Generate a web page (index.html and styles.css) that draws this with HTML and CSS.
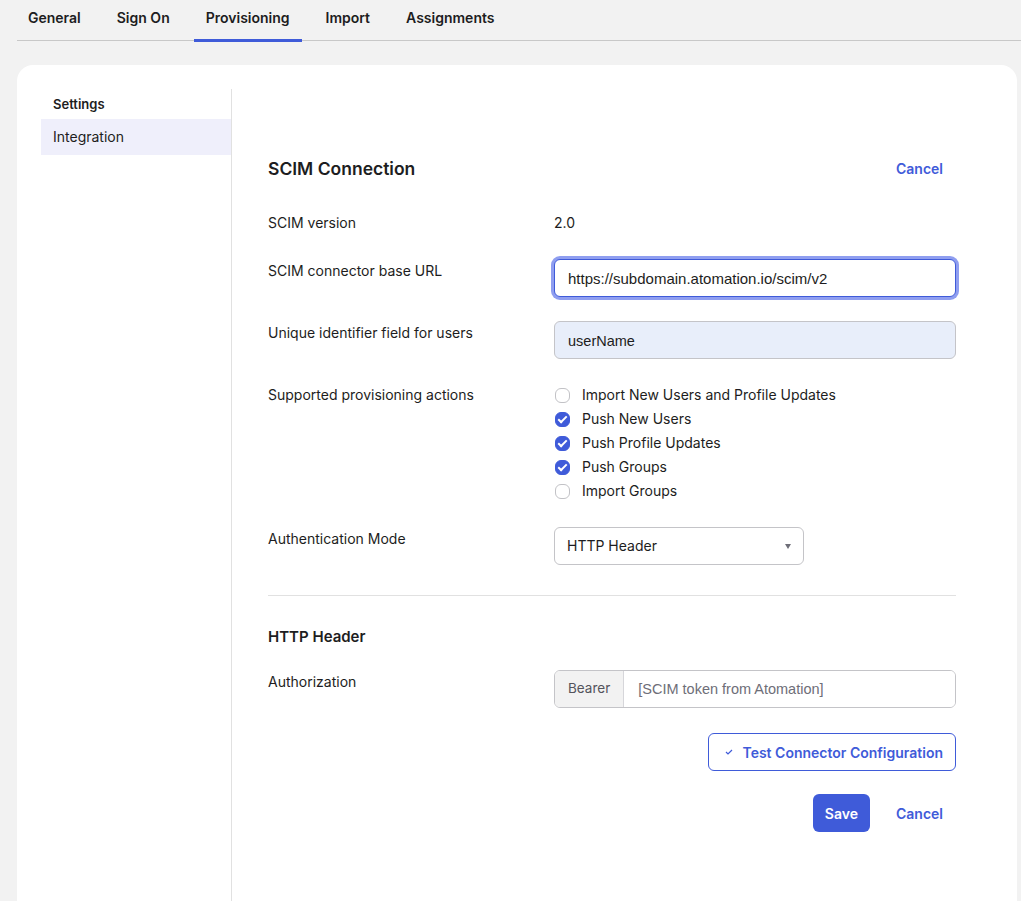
FILE: index.html
```html
<!DOCTYPE html>
<html lang="en">
<head>
    <meta charset="UTF-8">
    <meta name="viewport" content="width=device-width, initial-scale=1.0">
    <title>Provisioning</title>
    <link rel="stylesheet" href="styles.css">
</head>
<body>
    <nav class="tabs">
        <a href="#general">General</a>
        <a href="#signon">Sign On</a>
        <a href="#provisioning" class="active">Provisioning</a>
        <a href="#import">Import</a>
        <a href="#assignments">Assignments</a>
    </nav>

    <div class="card">
        <aside class="side">
            <div class="side-title">Settings</div>
            <a href="#integration" class="side-item">Integration</a>
        </aside>

        <main class="content">
            <div class="section-head">
                <h2>SCIM Connection</h2>
                <a href="#cancel" class="link">Cancel</a>
            </div>

            <div class="row first">
                <div class="label">SCIM version</div>
                <div class="value">2.0</div>
            </div>

            <div class="row">
                <div class="label">SCIM connector base URL</div>
                <div class="value"><input type="text" class="field focus" value="https://subdomain.atomation.io/scim/v2"></div>
            </div>

            <div class="row">
                <div class="label">Unique identifier field for users</div>
                <div class="value"><input type="text" class="field filled" value="userName"></div>
            </div>

            <div class="row">
                <div class="label">Supported provisioning actions</div>
                <div class="value checks">
                    <label class="check"><span class="box"></span>Import New Users and Profile Updates</label>
                    <label class="check"><span class="box on"></span>Push New Users</label>
                    <label class="check"><span class="box on"></span>Push Profile Updates</label>
                    <label class="check"><span class="box on"></span>Push Groups</label>
                    <label class="check"><span class="box"></span>Import Groups</label>
                </div>
            </div>

            <div class="row">
                <div class="label">Authentication Mode</div>
                <div class="value">
                    <div class="select">HTTP Header<span class="caret"></span></div>
                </div>
            </div>

            <hr>

            <h3>HTTP Header</h3>

            <div class="row after-head">
                <div class="label">Authorization</div>
                <div class="value">
                    <div class="group">
                        <span class="addon">Bearer</span>
                        <input type="text" class="group-input" placeholder="[SCIM token from Atomation]">
                    </div>
                </div>
            </div>

            <div class="actions">
                <button class="btn-outline">
                    <svg width="8" height="6" viewBox="0 0 8 6"><path d="M1 3l2 2 4-4" fill="none" stroke="#3f5bd9" stroke-width="1.2"/></svg>
                    Test Connector Configuration
                </button>
            </div>

            <div class="actions save-row">
                <button class="btn-primary">Save</button>
                <a href="#cancel" class="link">Cancel</a>
            </div>
        </main>
    </div>
</body>
</html>
```

FILE: styles.css
```css
body {
    margin: 0;
    background-color: #f2f2f2;
    font-family: Inter, "Noto Sans", sans-serif;
    color: #1d1d21;
    font-size: 14px;
}
.tabs {
    display: flex;
    margin-left: 17px;
    height: 40px;
    border-bottom: 1px solid #c8c8c8;
}
.tabs a {
    display: block;
    padding: 9px 12px 0;
    margin-right: 12px;
    color: #1d1d21;
    font-weight: 600;
    text-decoration: none;
    height: 30px;
    border-bottom: 3px solid transparent;
}
.tabs a:first-child {
    margin-left: -1px;
}
.tabs a.active {
    border-bottom-color: #3f5bd9;
}
.card {
    display: flex;
    margin: 24px 4px 0 17px;
    background: #fff;
    border-radius: 16px 16px 0 0;
    height: 840px;
    padding-top: 24px;
}
.side {
    width: 190px;
    margin-left: 24px;
    border-right: 1px solid #e1e1e1;
}
.side-title {
    font-size: 13px;
    font-weight: 600;
    padding: 7px 12px 7px;
}
.side-item {
    display: block;
    background: #efeffb;
    color: #1d1d21;
    text-decoration: none;
    padding: 9px 12px;
    line-height: 18px;
}
.content {
    width: 688px;
    margin-left: 36px;
    padding-top: 67px;
}
.section-head {
    display: flex;
    justify-content: space-between;
    align-items: center;
    padding-right: 13px;
    height: 24px;
}
h2 {
    font-size: 17.5px;
    font-weight: 600;
    margin: 0;
}
h3 {
    font-size: 15px;
    font-weight: 600;
    line-height: 20px;
    margin: 31px 0 0;
}
.link {
    color: #3f5bd9;
    font-weight: 600;
    text-decoration: none;
}
.row {
    display: flex;
    align-items: flex-start;
    margin-top: 24px;
}
.row.first {
    margin-top: 31px;
}
.row.after-head {
    margin-top: 23px;
}
.label {
    width: 286px;
    line-height: 24px;
}
.value {
    flex: 1;
    line-height: 24px;
}
.field {
    display: block;
    box-sizing: border-box;
    width: 402px;
    height: 38px;
    margin: 0;
    padding: 0 13px;
    border: 1px solid #c4c4c8;
    border-radius: 6px;
    font-family: "Liberation Sans", Arial, sans-serif;
    font-size: 15px;
    color: #1d1d21;
    outline: none;
}
.field.focus {
    border-color: #3f5bd9;
    box-shadow: 0 0 0 3px #8f9ef0;
}
.field.filled {
    background: #e8eefa;
    font-size: 14.5px;
    padding-top: 2px;
}
.checks {
    display: flex;
    flex-direction: column;
}
.check {
    display: flex;
    align-items: center;
    height: 24px;
    gap: 12px;
}
.box {
    box-sizing: border-box;
    width: 15px;
    height: 15px;
    margin-left: 1px;
    border: 1.5px solid #c2c2c6;
    border-radius: 6px;
    background: #fff;
    position: relative;
}
.box.on {
    border-color: #3f5bd9;
    background: #3f5bd9;
}
.box.on::after {
    content: "";
    position: absolute;
    left: 4px;
    top: 1px;
    width: 3px;
    height: 7px;
    border: solid #fff;
    border-width: 0 2px 2px 0;
    transform: rotate(45deg);
}
.select {
    box-sizing: border-box;
    width: 250px;
    height: 38px;
    padding: 0 12px;
    border: 1px solid #c4c4c8;
    border-radius: 6px;
    display: flex;
    align-items: center;
    justify-content: space-between;
}
.caret {
    width: 0;
    height: 0;
    border-left: 3px solid transparent;
    border-right: 3px solid transparent;
    border-top: 5px solid #6e6e78;
}
hr {
    border: none;
    border-top: 1px solid #e1e1e1;
    margin: 30px 0 0;
}
.group {
    display: flex;
    width: 402px;
    height: 38px;
    box-sizing: border-box;
    border: 1px solid #c4c4c8;
    border-radius: 6px;
    overflow: hidden;
}
.addon {
    background: #f2f2f2;
    color: #54545c;
    border-right: 1px solid #d6d6da;
    padding: 0 13px 3px;
    display: flex;
    align-items: center;
    font-size: 13.5px;
}
.group-input {
    flex: 1;
    border: none;
    outline: none;
    padding: 0 14px;
    font-family: "Liberation Sans", Arial, sans-serif;
    font-size: 14.5px;
}
.group-input::placeholder {
    color: #6e6e78;
}
.actions {
    display: flex;
    justify-content: flex-end;
    align-items: center;
    margin-top: 25px;
}
.btn-outline {
    display: flex;
    align-items: center;
    gap: 10px;
    height: 38px;
    padding: 0 12px 0 16px;
    background: #fff;
    border: 1px solid #3f5bd9;
    border-radius: 6px;
    color: #3f5bd9;
    font-family: Inter, sans-serif;
    font-size: 14px;
    font-weight: 600;
}
.save-row {
    margin-top: 23px;
    gap: 26px;
    padding-right: 13px;
}
.btn-primary {
    height: 38px;
    padding: 0 12px;
    background: #3f5bd9;
    color: #fff;
    border: none;
    border-radius: 6px;
    font-family: Inter, sans-serif;
    font-size: 14px;
    font-weight: 600;
}
```
